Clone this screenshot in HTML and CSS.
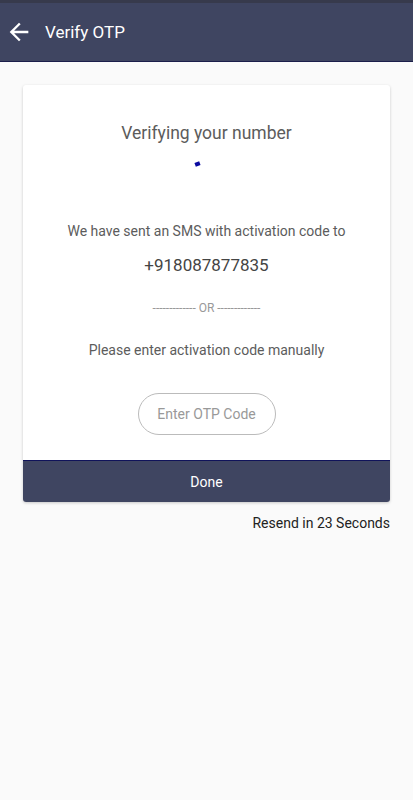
FILE: index.html
```html
<!DOCTYPE html>
<html lang="en">
<head>
<meta charset="UTF-8">
<meta name="viewport" content="width=device-width, initial-scale=1.0">
<title>Verify OTP</title>
<link rel="stylesheet" href="styles.css">
</head>
<body>

<div class="status-bar"></div>
<div class="app-bar">
    <svg class="back" width="28" height="28" viewBox="0 0 24 24">
        <path d="M20 11H7.83l5.59-5.59L12 4l-8 8 8 8 1.41-1.41L7.83 13H20v-2z" fill="#fff"/>
    </svg>
    <span class="title">Verify OTP</span>
</div>

<div class="content">
    <div class="card">
        <div class="card-body">
            <div class="heading">Verifying your number</div>
            <div class="spinner"><span></span></div>
            <div class="msg">We have sent an SMS with activation code to</div>
            <div class="phone">+918087877835</div>
            <div class="or">------------- OR -------------</div>
            <div class="msg">Please enter activation code manually</div>
            <input class="otp" type="text" placeholder="Enter OTP Code">
        </div>
        <button class="done">Done</button>
    </div>
    <div class="resend">Resend in 23 Seconds</div>
</div>

</body>
</html>
```

FILE: styles.css
```css
body {
    margin: 0;
    font-family: Roboto, "Liberation Sans", sans-serif;
    background-color: #fafafa;
    min-height: 800px;
}

.status-bar {
    height: 3px;
    background-color: #373a4c;
}

.app-bar {
    height: 58px;
    background-color: #3f4561;
    border-bottom: 1px solid #1b1e4a;
    display: flex;
    align-items: center;
    padding-left: 5px;
    color: #fff;
}

.back {
    margin-right: 12px;
}

.title {
    font-size: 17px;
}

.content {
    padding: 23px 23px 0 23px;
}

.card {
    background-color: #fff;
    border-radius: 3px;
    box-shadow: 0 1px 3px rgba(0, 0, 0, 0.2);
    overflow: hidden;
}

.card-body {
    display: flex;
    flex-direction: column;
    align-items: center;
    padding: 38px 0 25px 0;
    color: #5c5c5c;
}

.heading {
    font-size: 17.5px;
    line-height: 20px;
}

.spinner {
    height: 20px;
    width: 20px;
    margin-top: 10px;
    margin-bottom: 49px;
    position: relative;
}

.spinner span {
    position: absolute;
    left: -2px;
    top: 9px;
    width: 5px;
    height: 4px;
    background-color: #0a0aa0;
    transform: rotate(-20deg);
}

.msg {
    font-size: 14px;
    line-height: 18px;
}

.phone {
    font-size: 17px;
    line-height: 20px;
    margin-top: 15px;
    color: #444;
}

.or {
    font-size: 12px;
    color: #999;
    margin-top: 26px;
    margin-bottom: 26px;
}

.otp {
    margin-top: 34px;
    width: 138px;
    height: 42px;
    box-sizing: border-box;
    border: 1px solid #bbb;
    border-radius: 21px;
    text-align: center;
    font-family: inherit;
    font-size: 14px;
    outline: none;
}

.otp::placeholder {
    color: #999;
}

.done {
    display: block;
    width: 100%;
    height: 42px;
    border: none;
    border-top: 1px solid #10135a;
    background-color: #3f4561;
    color: #fff;
    font-family: inherit;
    font-size: 14px;
}

.resend {
    text-align: right;
    font-size: 14px;
    color: #222;
    margin-top: 13px;
}
```
